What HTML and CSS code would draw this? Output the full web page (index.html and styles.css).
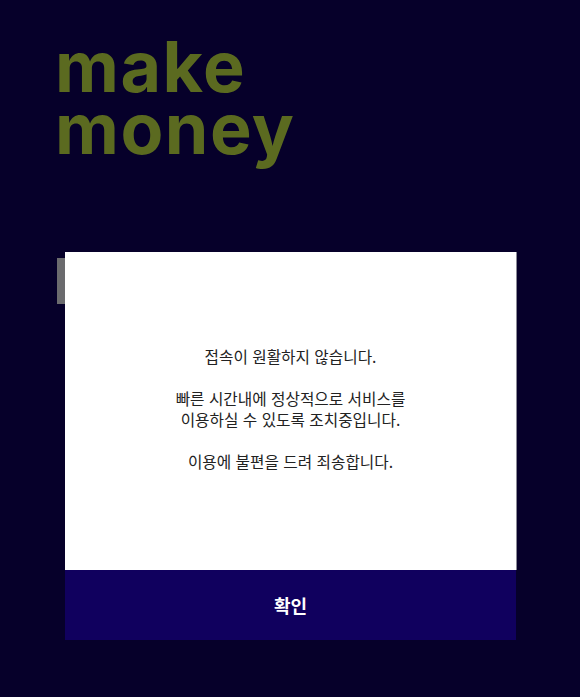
FILE: index.html
```html
<!DOCTYPE html>
<html lang="ko">
<head>
<meta charset="utf-8">
<link rel="stylesheet" href="styles.css">
</head>
<body>
<main class="page">
  <h1 class="brand"><span class="brand-line">make</span><span class="brand-line">money</span></h1>
  <div class="field"></div>
</main>
<div class="overlay">
  <div class="dialog">
    <div class="dialog-body">
      <p class="message">접속이 원활하지 않습니다.<br><br>빠른 시간내에 정상적으로 서비스를<br>이용하실 수 있도록 조치중입니다.<br><br>이용에 불편을 드려 죄송합니다.</p>
    </div>
    <button class="confirm">확인</button>
  </div>
</div>
</body>
</html>
```

FILE: styles.css
```css
html, body {
  margin: 0;
  padding: 0;
  height: 100%;
}
body {
  background: #06002a;
  font-family: "Noto Sans CJK KR", "Noto Sans", sans-serif;
  overflow: hidden;
}
.page {
  padding: 36px 0 0 55px;
}
.brand {
  margin: 0;
  display: flex;
  flex-direction: column;
  font-family: Inter, "Noto Sans", sans-serif;
  font-weight: 700;
  font-size: 70px;
  line-height: 62px;
  letter-spacing: 1.5px;
  color: #5b6a20;
}
.brand-line {
  display: block;
}
.field {
  margin: 98px 0 0 2px;
  width: 30px;
  height: 46px;
  background: #6b6b6e;
}
.overlay {
  position: absolute;
  inset: 0;
  padding: 252px 0 0 65px;
}
.dialog {
  width: 451px;
  height: 388px;
  display: flex;
  flex-direction: column;
  background: #ffffff;
}
.dialog-body {
  flex: 1;
  display: flex;
  align-items: center;
  justify-content: center;
  padding-bottom: 4px;
  box-shadow: 1px 0 0 #8a8a96;
}
.message {
  margin: 0;
  text-align: center;
  font-size: 15.7px;
  line-height: 21px;
  color: #222222;
}
.confirm {
  height: 70px;
  border: 0;
  background: #10005e;
  color: #ffffff;
  font-family: "Noto Sans CJK KR", sans-serif;
  font-weight: 700;
  font-size: 18px;
  padding: 0;
}
```
